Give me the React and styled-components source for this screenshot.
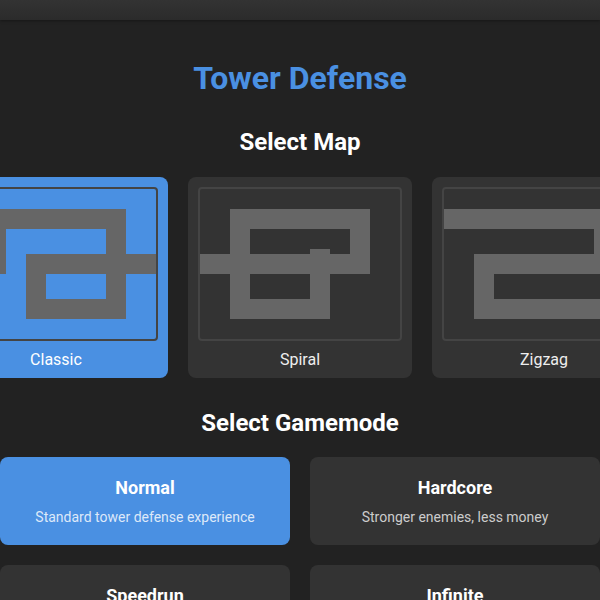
import React, { useState } from 'react';
import styled, { createGlobalStyle } from 'styled-components';

const GlobalStyle = createGlobalStyle`
  html, body {
    margin: 0;
    padding: 0;
    background: #222;
    overflow: hidden;
  }

  body {
    font-family: Roboto, "Liberation Sans", sans-serif;
    color: #fff;
  }
`;

const blue = '#4a90e2';

const Page = styled.div`
  width: 600px;
  min-height: 600px;
  overflow: hidden;
  background: #222;
`;

const TopBar = styled.div`
  height: 20px;
  background: linear-gradient(#333, #2b2b2b);
  box-shadow: 0 1px 3px rgba(0, 0, 0, 0.35);
`;

const Menu = styled.main`
  display: flex;
  flex-direction: column;
  align-items: center;
  padding-top: 39px;
`;

const Title = styled.h1`
  margin: 0 0 31px;
  font-size: 32px;
  line-height: 38px;
  font-weight: 700;
  color: ${blue};
`;

const Heading = styled.h2`
  margin: 0 0 ${p => p.$gap || 21}px;
  font-size: 24px;
  line-height: 28px;
  font-weight: 700;
  color: #fff;
`;

const MapRow = styled.div`
  display: flex;
  justify-content: center;
  gap: 20px;
  width: 100%;
  margin-bottom: 31px;
`;

const MapCard = styled.button`
  flex: 0 0 auto;
  display: flex;
  flex-direction: column;
  align-items: center;
  width: 224px;
  padding: 10px 10px 9px;
  border: none;
  border-radius: 8px;
  background: ${p => (p.$active ? blue : '#333')};
  color: #fff;
  font: inherit;
  cursor: pointer;
`;

const Preview = styled.div`
  border: 2px solid #444;
  border-radius: 4px;
  line-height: 0;

  svg {
    display: block;
  }
`;

const MapName = styled.span`
  margin-top: 9px;
  font-size: 16px;
  line-height: 19px;
  color: ${p => (p.$active ? '#fff' : '#eee')};
`;

const ModeGrid = styled.div`
  display: grid;
  grid-template-columns: 1fr 1fr;
  gap: 20px;
  width: 100%;
`;

const ModeCard = styled.button`
  display: flex;
  flex-direction: column;
  align-items: center;
  padding: 20px 16px 19px;
  border: none;
  border-radius: 8px;
  background: ${p => (p.$active ? blue : '#333')};
  color: #fff;
  font: inherit;
  cursor: pointer;
`;

const ModeName = styled.span`
  margin-bottom: 9px;
  font-size: 18px;
  line-height: 22px;
  font-weight: 700;
`;

const ModeInfo = styled.span`
  font-size: 14px;
  line-height: 18px;
  color: ${p => (p.$active ? 'rgba(255, 255, 255, 0.82)' : '#ccc')};
`;

// waypoints in preview space (200 x 150)
const maps = [
  {
    id: 'classic',
    name: 'Classic',
    path: [[0, 75], [40, 75], [40, 30], [160, 30], [160, 120], [80, 120], [80, 75], [200, 75]],
  },
  {
    id: 'spiral',
    name: 'Spiral',
    path: [[0, 75], [160, 75], [160, 30], [40, 30], [40, 120], [120, 120], [120, 60]],
  },
  {
    id: 'zigzag',
    name: 'Zigzag',
    path: [[0, 30], [160, 30], [160, 75], [40, 75], [40, 120], [200, 120]],
  },
];

const modes = [
  { id: 'normal', name: 'Normal', info: 'Standard tower defense experience' },
  { id: 'hardcore', name: 'Hardcore', info: 'Stronger enemies, less money' },
  { id: 'speedrun', name: 'Speedrun', info: 'Faster waves, bigger rewards' },
  { id: 'infinite', name: 'Infinite', info: 'Endless waves, survive as long as you can' },
];

const MapPreview = ({ path }) => (
  <Preview>
    <svg width="200" height="150" viewBox="0 0 200 150">
      <polyline
        points={path.map(p => p.join(',')).join(' ')}
        fill="none"
        stroke="#666"
        strokeWidth="20"
        strokeLinejoin="miter"
        strokeLinecap="butt"
      />
    </svg>
  </Preview>
);

export default function App() {
  const [map, setMap] = useState('classic');
  const [mode, setMode] = useState('normal');

  return (
    <Page>
      <GlobalStyle />
      <TopBar />
      <Menu>
        <Title>Tower Defense</Title>

        <Heading>Select Map</Heading>
        <MapRow>
          {maps.map(m => (
            <MapCard key={m.id} $active={map === m.id} onClick={() => setMap(m.id)}>
              <MapPreview path={m.path} />
              <MapName $active={map === m.id}>{m.name}</MapName>
            </MapCard>
          ))}
        </MapRow>

        <Heading $gap={20}>Select Gamemode</Heading>
        <ModeGrid>
          {modes.map(m => (
            <ModeCard key={m.id} $active={mode === m.id} onClick={() => setMode(m.id)}>
              <ModeName>{m.name}</ModeName>
              <ModeInfo $active={mode === m.id}>{m.info}</ModeInfo>
            </ModeCard>
          ))}
        </ModeGrid>
      </Menu>
    </Page>
  );
}
